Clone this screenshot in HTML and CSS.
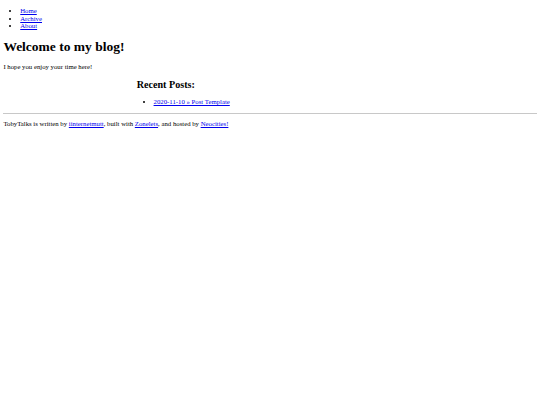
FILE: index.html
```html
<!DOCTYPE html>
<html lang="en">
<head>
<meta charset="utf-8">
<title>TobyTalks</title>
<link rel="stylesheet" href="styles.css">
</head>
<body>
<nav class="site-nav">
  <ul>
    <li><a href="#">Home</a></li>
    <li><a href="#">Archive</a></li>
    <li><a href="#">About</a></li>
  </ul>
</nav>
<main>
  <h1>Welcome to my blog!</h1>
  <p>I hope you enjoy your time here!</p>
  <section class="recent">
    <h2>Recent Posts:</h2>
    <ul>
      <li><a href="#">2020-11-10 » Post Template</a></li>
    </ul>
  </section>
</main>
<footer class="site-footer">
  <hr>
  <p>TobyTalks is written by <a href="#">iinternetmutt</a>, built with <a href="#">Zonelets</a>, and hosted by <a href="#">Neocities!</a></p>
</footer>
</body>
</html>
```

FILE: styles.css
```css
html {
  background: #fff;
}

body {
  margin: 3.375px;
  font-family: "Liberation Serif", "Times New Roman", serif;
  font-size: 6.75px;
  line-height: 1.11;
  color: #000;
}

a {
  color: #0000ee;
}

ul {
  margin: 1em 0;
  padding-left: 2.5em;
}

/* the menu sits close to the top of the page */
.site-nav ul {
  margin-top: 0.6em;
}

h1 {
  font-size: 2em;
  margin: 0.67em 0;
}

h2 {
  font-size: 1.5em;
  margin: 0.83em 0;
}

p {
  margin: 1em 0;
}

.recent {
  width: 50%;
  margin: 0 auto;
}

.site-footer hr {
  margin: 0.4em 0 0.5em;
  border: 0;
  border-top: 1px solid #c8c8c8;
}
```
